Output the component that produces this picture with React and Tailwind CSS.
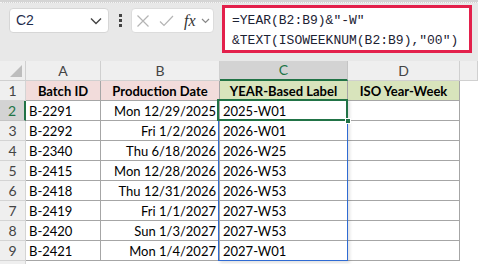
import React from "react";

const rows = [
  ["B-2291", "Mon 12/29/2025", "2025-W01"],
  ["B-2292", "Fri 1/2/2026", "2026-W01"],
  ["B-2340", "Thu 6/18/2026", "2026-W25"],
  ["B-2415", "Mon 12/28/2026", "2026-W53"],
  ["B-2418", "Thu 12/31/2026", "2026-W53"],
  ["B-2419", "Fri 1/1/2027", "2027-W53"],
  ["B-2420", "Sun 1/3/2027", "2027-W53"],
  ["B-2421", "Mon 1/4/2027", "2027-W01"],
];

const cols = "grid grid-cols-[26px_75px_119px_128px_112px_1fr]";
const cellFont = { fontFamily: "Lato, 'Liberation Sans', sans-serif" };

function Toolbar() {
  return (
    <div className="h-[61px] bg-[#e8e8e8] relative">
      <div className="h-[3px] bg-[#d4d4d4] border-b border-dotted border-[#f4f4f4]" />
      <div className="flex items-start pl-[9px] pt-[2px]">
        <div className="mt-[3px] w-[100px] h-[25px] bg-white rounded-[4px] border border-[#d6d6d6] flex items-center justify-between pl-[6px] pr-[6px]">
          <span
            className="text-[14px] text-[#1f2d4d]"
            style={{ fontFamily: "'Liberation Sans', sans-serif" }}
          >
            C2
          </span>
          <svg width="12" height="8" viewBox="0 0 12 8" fill="none">
            <path d="M1 1.5L6 6.5L11 1.5" stroke="#444" strokeWidth="1.4" />
          </svg>
        </div>
        <div className="w-[22px] h-[25px] mt-[3px] flex flex-col items-center justify-center gap-[2px]">
          <span className="w-[3px] h-[3px] bg-[#444]" />
          <span className="w-[3px] h-[3px] bg-[#444]" />
          <span className="w-[3px] h-[3px] bg-[#444]" />
        </div>
        <div className="mt-[3px] w-[83px] h-[25px] bg-white rounded-[4px] border border-[#dcdcdc] flex items-center pl-[4px]">
          <svg width="14" height="14" viewBox="0 0 14 14" fill="none">
            <path d="M1.5 1.5L12.5 12.5M12.5 1.5L1.5 12.5" stroke="#b4b4b4" strokeWidth="1.2" />
          </svg>
          <svg className="ml-[9px]" width="15" height="12" viewBox="0 0 15 12" fill="none">
            <path d="M1 6.5L5 10.5L14 1" stroke="#b4b4b4" strokeWidth="1.2" />
          </svg>
          <span
            className="ml-[10px] text-[16px] italic text-[#333] leading-none"
            style={{ fontFamily: "'Liberation Serif', serif" }}
          >
            fx
          </span>
          <svg className="ml-[5px]" width="9" height="6" viewBox="0 0 9 6" fill="none">
            <path d="M1 1L4.5 4.5L8 1" stroke="#888" strokeWidth="1.2" />
          </svg>
        </div>
        <div className="ml-[8px] w-[250px] h-[48px] border-[3px] border-[#e3204b] bg-white pl-[7px] pt-[3px]">
          <div
            className="text-[13px] leading-[20px] text-[#1c2233] whitespace-pre"
            style={{ fontFamily: "'Liberation Mono', monospace" }}
          >
            {'=YEAR(B2:B9)&"-W"'}
            {"\n"}
            {'&TEXT(ISOWEEKNUM(B2:B9),"00")'}
          </div>
        </div>
      </div>
    </div>
  );
}

function ColumnHeaders() {
  const letters = ["A", "B", "C", "D", ""];
  return (
    <div className={`${cols} h-[20px] text-[14px] leading-[18px] text-[#444]`} style={cellFont}>
      <div className="relative bg-[#efefef] border-r border-b border-[#d0d0d0]">
        <svg className="absolute right-[3px] bottom-[3px]" width="12" height="12" viewBox="0 0 12 12">
          <path d="M12 0L12 12L0 12Z" fill="#bdbdbd" />
        </svg>
      </div>
      {letters.map((l, i) =>
        l === "C" ? (
          <div
            key={i}
            className="bg-[#d3d3d3] border-r border-[#c4c4c4] border-b-2 border-b-[#217346] text-[#217346] flex items-center justify-center"
          >
            {l}
          </div>
        ) : (
          <div
            key={i}
            className="bg-[#efefef] border-r border-b border-[#d0d0d0] flex items-center justify-center"
          >
            {l}
          </div>
        )
      )}
    </div>
  );
}

function RowHeader({ n, active }) {
  if (active) {
    return (
      <div className="h-[20px] text-[14px] bg-[#d3d3d3] border-b border-[#c4c4c4] border-r-2 border-r-[#217346] text-[#217346] flex items-center justify-center">
        {n}
      </div>
    );
  }
  return (
    <div className="h-[20px] text-[14px] bg-[#efefef] border-r border-b border-[#d4d4d4] text-[#444] flex items-center justify-center">
      {n}
    </div>
  );
}

function Sheet() {
  const cell = "h-[20px] border-r border-b border-[#a6a6a6] flex items-center px-[3px] whitespace-nowrap";
  return (
    <div className="relative" style={cellFont}>
      <ColumnHeaders />
      <div className={`${cols} h-[20px] text-[13px] leading-[18px]`}>
        <RowHeader n={1} />
        <div className={`${cell} bg-[#f2dcdb] justify-center font-bold text-black`}>Batch ID</div>
        <div className={`${cell} bg-[#f2dcdb] justify-center font-bold text-black`}>Production Date</div>
        <div className={`${cell} bg-[#d8e4bc] justify-center font-bold text-black`}>YEAR-Based Label</div>
        <div className={`${cell} bg-[#d8e4bc] justify-center font-bold text-black`}>ISO Year-Week</div>
        <div className="bg-white" />
      </div>
      {rows.map((r, i) => (
        <div key={r[0]} className={`${cols} h-[20px] text-[13px] leading-[18px] text-black`}>
          <RowHeader n={i + 2} active={i === 0} />
          <div className={`${cell} bg-white`}>{r[0]}</div>
          <div className={`${cell} bg-white justify-end`}>{r[1]}</div>
          <div className={`${cell} bg-white`}>{r[2]}</div>
          <div className={`${cell} bg-white`} />
          <div className="bg-white" />
        </div>
      ))}
      <div className={`${cols} h-[10px]`}>
        <div className="bg-[#efefef] border-r border-[#d4d4d4]" />
        <div className="col-span-5 bg-white" />
      </div>

      {/* spill range outline */}
      <div className="absolute left-[218px] top-[38px] w-[130px] h-[162px] border border-[#2f6bd3] shadow-[2px_2px_3px_rgba(0,0,0,0.12)] pointer-events-none" />
      {/* active cell */}
      <div className="absolute left-[217px] top-[38px] w-[131px] h-[22px] border-2 border-[#217346] pointer-events-none" />
      <div className="absolute left-[345px] top-[57px] w-[6px] h-[6px] bg-[#217346] border border-white pointer-events-none" />
    </div>
  );
}

export default function App() {
  return (
    <div className="w-[478px] h-[264px] overflow-hidden bg-white">
      <Toolbar />
      <Sheet />
    </div>
  );
}
